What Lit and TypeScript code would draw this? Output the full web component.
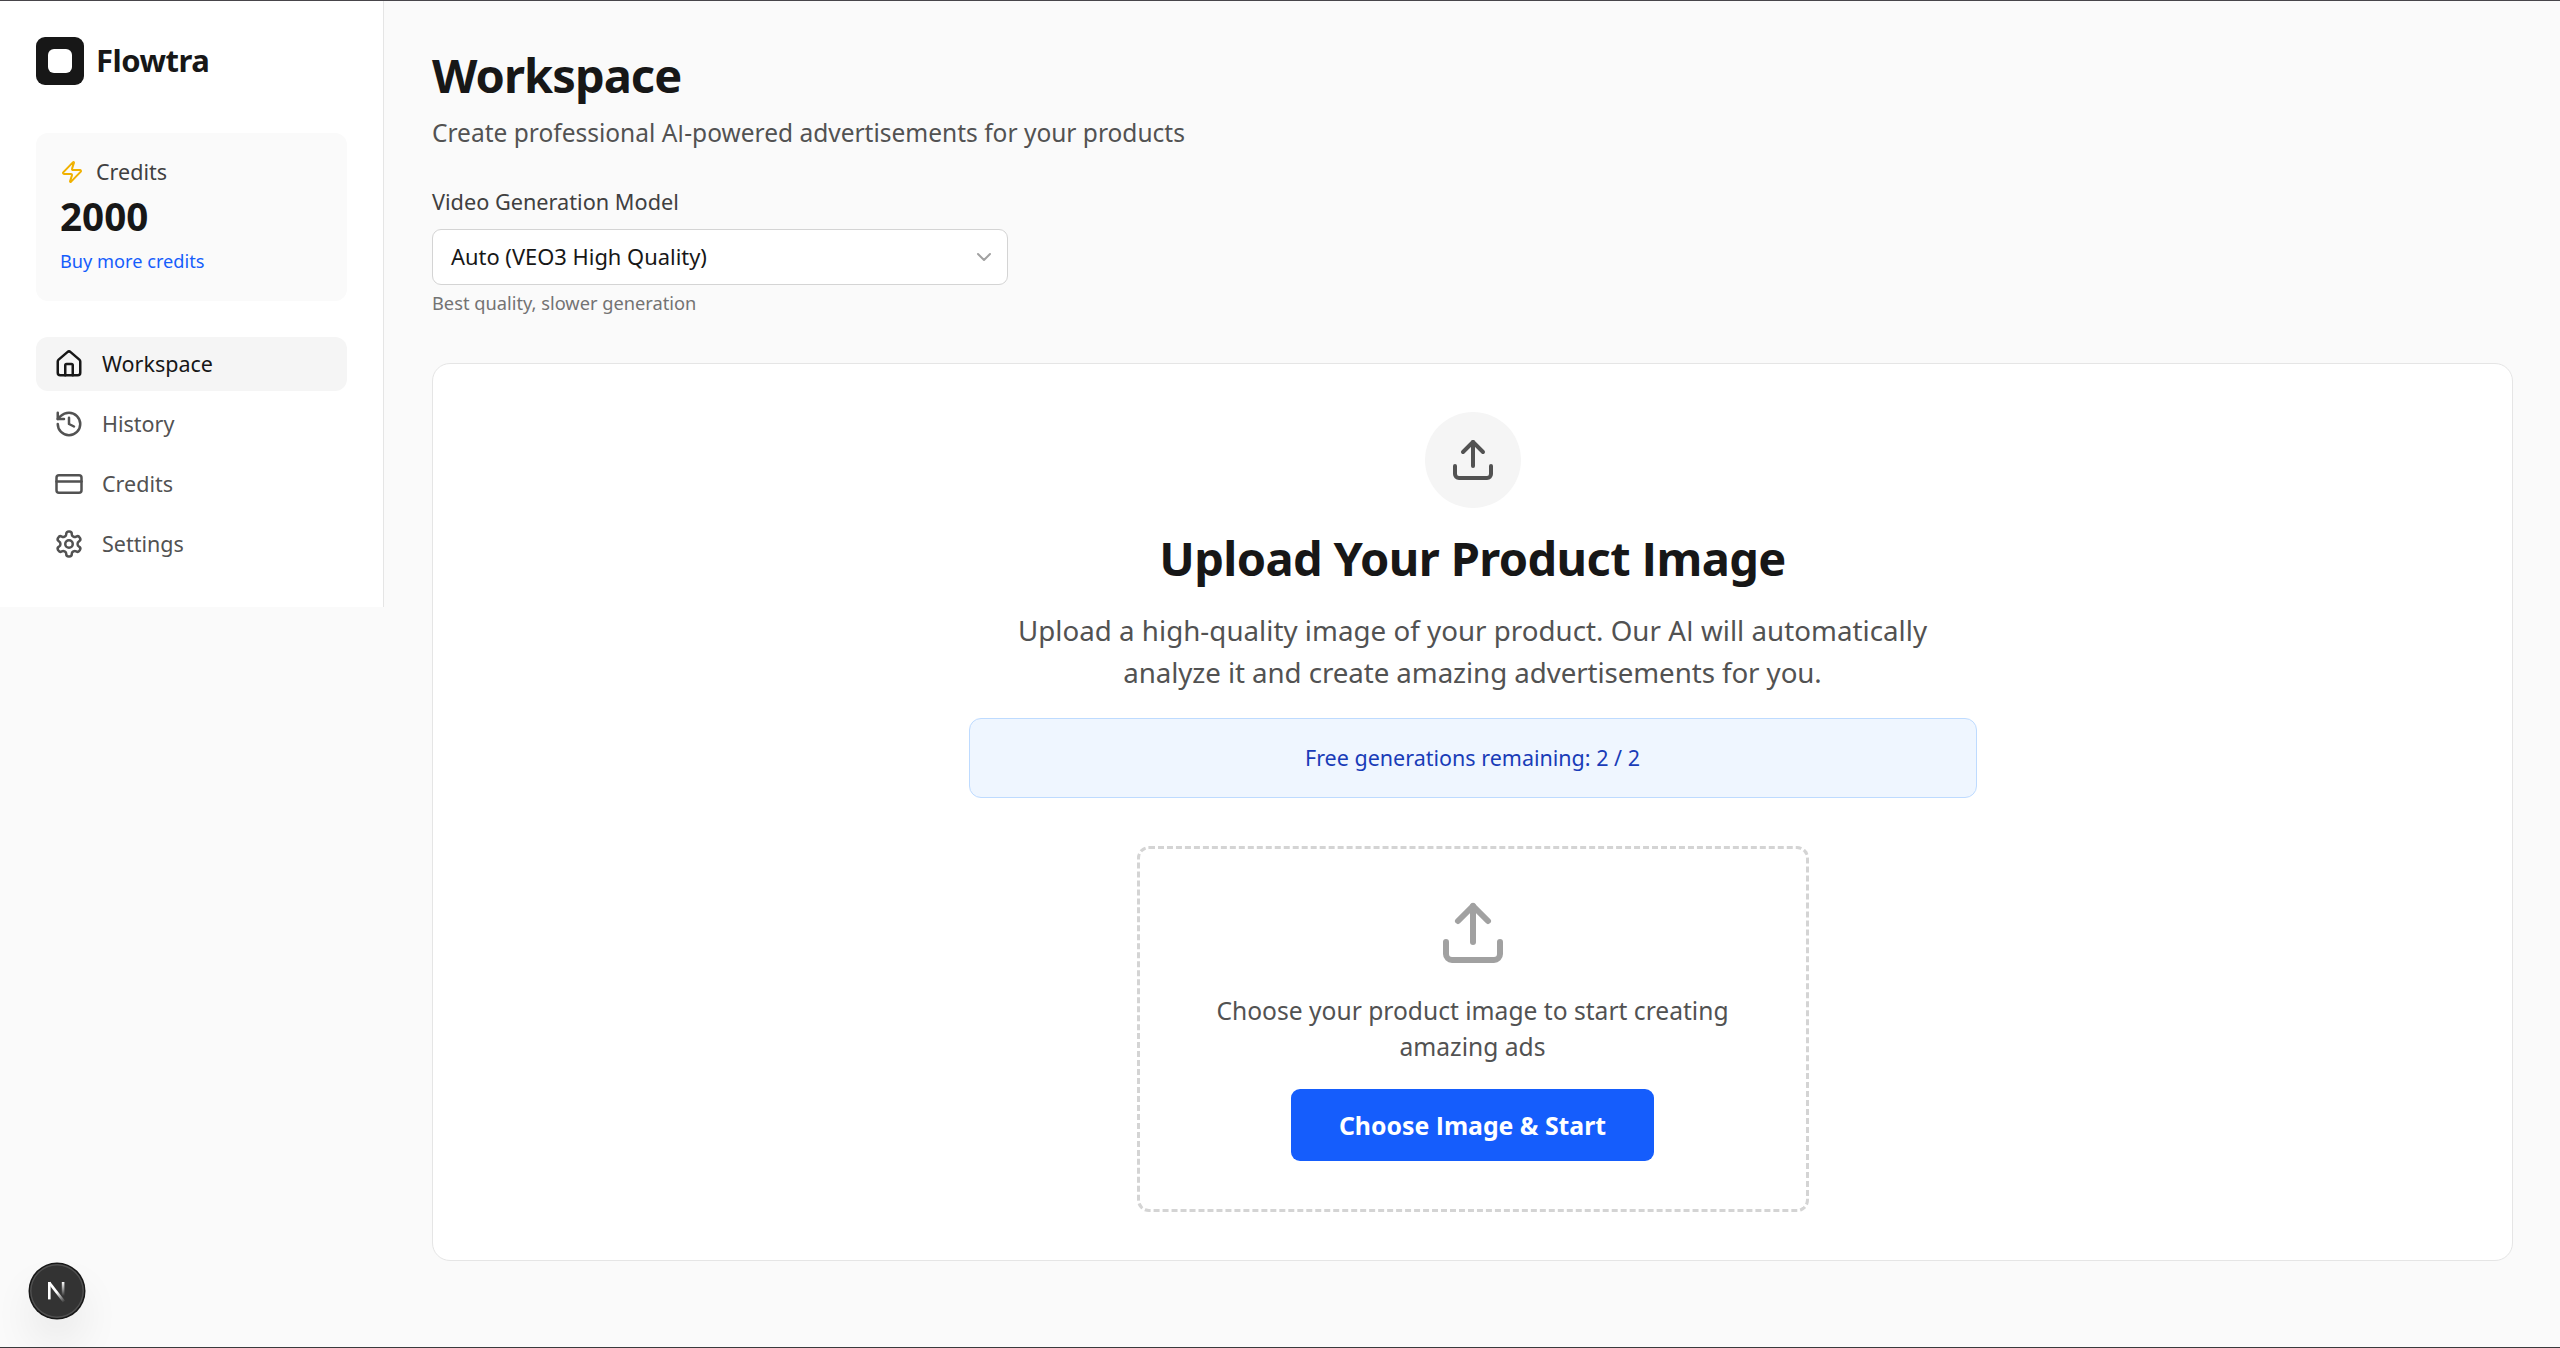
import { LitElement, html, svg, css } from 'lit';
import type { SVGTemplateResult, TemplateResult } from 'lit';
import { customElement, property, state } from 'lit/decorators.js';
import { classMap } from 'lit/directives/class-map.js';

const glyphs: Record<string, SVGTemplateResult> = {
  zap: svg`<path d="M4 14a1 1 0 0 1-.78-1.63l9.9-10.2a.5.5 0 0 1 .86.46l-1.92 6.02A1 1 0 0 0 13 10h7a1 1 0 0 1 .78 1.63l-9.9 10.2a.5.5 0 0 1-.86-.46l1.92-6.02A1 1 0 0 0 11 14z"/>`,
  house: svg`<path d="M15 21v-8a1 1 0 0 0-1-1h-4a1 1 0 0 0-1 1v8"/><path d="M3 10a2 2 0 0 1 .709-1.528l7-5.999a2 2 0 0 1 2.582 0l7 5.999A2 2 0 0 1 21 10v9a2 2 0 0 1-2 2H5a2 2 0 0 1-2-2z"/>`,
  history: svg`<path d="M3 12a9 9 0 1 0 9-9 9.75 9.75 0 0 0-6.74 2.74L3 8"/><path d="M3 3v5h5"/><path d="M12 7v5l4 2"/>`,
  card: svg`<rect width="20" height="14" x="2" y="5" rx="2"/><path d="M2 10h20"/>`,
  settings: svg`<path d="M12.22 2h-.44a2 2 0 0 0-2 2v.18a2 2 0 0 1-1 1.73l-.43.25a2 2 0 0 1-2 0l-.15-.08a2 2 0 0 0-2.73.73l-.22.38a2 2 0 0 0 .73 2.73l.15.1a2 2 0 0 1 1 1.72v.51a2 2 0 0 1-1 1.74l-.15.09a2 2 0 0 0-.73 2.73l.22.38a2 2 0 0 0 2.73.73l.15-.08a2 2 0 0 1 2 0l.43.25a2 2 0 0 1 1 1.73V20a2 2 0 0 0 2 2h.44a2 2 0 0 0 2-2v-.18a2 2 0 0 1 1-1.73l.43-.25a2 2 0 0 1 2 0l.15.08a2 2 0 0 0 2.73-.73l.22-.39a2 2 0 0 0-.73-2.73l-.15-.08a2 2 0 0 1-1-1.74v-.5a2 2 0 0 1 1-1.74l.15-.09a2 2 0 0 0 .73-2.73l-.22-.38a2 2 0 0 0-2.73-.73l-.15.08a2 2 0 0 1-2 0l-.43-.25a2 2 0 0 1-1-1.73V4a2 2 0 0 0-2-2z"/><circle cx="12" cy="12" r="3"/>`,
  upload: svg`<path d="M12 3v12"/><path d="m17 8-5-5-5 5"/><path d="M21 15v4a2 2 0 0 1-2 2H5a2 2 0 0 1-2-2v-4"/>`,
  chevron: svg`<path d="m6 9 6 6 6-6"/>`,
};

@customElement('line-icon')
class LineIcon extends LitElement {
  static styles = css`
    :host { display: block; flex: none; width: 24px; height: 24px; }
    .glyph { display: block; width: 100%; height: 100%; fill: none; stroke: currentColor; stroke-width: 2; stroke-linecap: round; stroke-linejoin: round; }
  `;
  @property() name = '';
  render() {
    return html`<svg class="glyph" viewBox="0 0 24 24" aria-hidden="true">${glyphs[this.name]}</svg>`;
  }
}

/* Sets the capital I in a face that draws it as a plain stem. */
const plainI = (text: string): TemplateResult =>
  html`${text.split('I').map((part, i) => (i ? html`<span class="stem">I</span>${part}` : part))}`;

const navItems = [
  { icon: 'house', label: 'Workspace' },
  { icon: 'history', label: 'History' },
  { icon: 'card', label: 'Credits' },
  { icon: 'settings', label: 'Settings' },
];

@customElement('app-root')
class AppRoot extends LitElement {
  static styles = css`
    :host {
      display: block; box-sizing: border-box; height: 1348px; overflow: hidden; position: relative;
      background: #fafafa; color: #171717;
      border-top: 1px solid #47454a; border-bottom: 1px solid #3a3a3c;
      font-family: "Noto Sans", "Open Sans", sans-serif; font-size: 21.5px; line-height: 30px;
    }
    * { box-sizing: border-box; }
    h1, h2, p { margin: 0; }
    .stem { font-family: "Open Sans", sans-serif; }
    .page { display: flex; align-items: flex-start; }

    .sidebar { width: 384px; flex: none; padding: 36px; background: #fff; border-right: 1px solid #e5e5e5; }
    .brand { display: flex; align-items: center; gap: 12px; height: 48px; margin-bottom: 48px; }
    .mark { width: 48px; height: 48px; border-radius: 9px; background: #171717; display: grid; place-items: center; }
    .hole { width: 24px; height: 24px; border-radius: 6px; background: #fff; }
    .brand-name { font-size: 31px; font-weight: 700; letter-spacing: -0.5px; line-height: 42px; padding-bottom: 2px; }
    .credits { height: 168px; padding: 24px; border-radius: 12px; background: #fafafa; margin-bottom: 36px; }
    .credits-head { display: flex; align-items: center; gap: 12px; color: #404040; }
    .zap { color: #f0b100; }
    .amount { font-size: 38.6px; font-weight: 700; line-height: 48px; margin-top: 5px; }
    .buy { display: block; font-size: 18.2px; line-height: 24px; margin-top: 9px; color: #155dfc; text-decoration: none; }
    .nav { display: flex; flex-direction: column; gap: 6px; }
    .nav-item { display: flex; align-items: center; gap: 18px; height: 54px; padding: 0 18px; border-radius: 12px; color: #525252; text-decoration: none; }
    .nav-item.active { background: #f5f5f5; color: #171717; }
    .nav-icon { width: 30px; height: 30px; }

    .main { flex: 1; min-width: 0; padding: 47px 47px 0 48px; }
    .title { font-size: 47px; font-weight: 700; line-height: 54px; letter-spacing: -0.95px; }
    .subtitle { font-size: 24.5px; line-height: 36px; margin-top: 13px; color: #525252; }
    .field { width: 576px; margin-top: 36px; }
    .label { display: block; font-size: 21.7px; color: #404040; }
    .select { display: flex; align-items: center; justify-content: space-between; height: 56px; margin-top: 12px; padding: 0 11px 0 18px; background: #fff; border: 1px solid #d4d4d4; border-radius: 9px; font-size: 21.9px; }
    .chevron { color: #a1a1a1; }
    .hint { font-size: 18.25px; line-height: 24px; margin-top: 6px; color: #737373; }

    .panel { margin-top: 48px; height: 898px; padding: 48px; background: #fff; border: 1px solid #e5e5e5; border-radius: 18px; display: flex; flex-direction: column; align-items: center; text-align: center; }
    .disc { width: 96px; height: 96px; flex: none; border-radius: 50%; background: #f5f5f5; color: #525252; display: grid; place-items: center; }
    .disc-icon { width: 48px; height: 48px; }
    .heading { font-size: 47px; font-weight: 700; line-height: 54px; letter-spacing: -0.62px; margin-top: 23px; white-space: nowrap; }
    .lead { font-size: 27.7px; line-height: 42px; margin-top: 24px; color: #525252; white-space: nowrap; }
    .lead-line { display: block; letter-spacing: 0.03px; }
    .lead-line.tight { letter-spacing: -0.07px; }
    .notice { width: 1008px; height: 80px; margin-top: 25px; border: 1px solid #bedbff; border-radius: 12px; background: #eff6ff; color: #193cb8; display: grid; place-items: center; }
    .drop { width: 672px; height: 366px; margin-top: 48px; padding: 48px; border: 3px dashed #d4d4d4; border-radius: 12px; display: flex; flex-direction: column; align-items: center; }
    .drop-icon { width: 72px; height: 72px; color: #a1a1a1; }
    .drop-text { font-size: 24.6px; line-height: 36px; margin-top: 24px; color: #525252; }
    .cta { width: 363px; height: 72px; margin-top: 24px; border: 0; border-radius: 9px; background: #155dfc; color: #fff; font: inherit; font-size: 24.8px; font-weight: 700; padding: 0; }

    .dev { position: absolute; left: 30px; bottom: 29px; width: 54px; height: 54px; border-radius: 50%; background: #333; box-shadow: 0 0 0 1.5px #171717, inset 0 0 0 1.5px rgba(255, 255, 255, 0.14), 0 24px 48px -12px rgba(0, 0, 0, 0.24); }
    .dev-logo { display: block; width: 54px; height: 54px; }
  `;

  @state() private current = 'Workspace';

  render() {
    return html`
      <div class="page">
        <aside class="sidebar">
          <div class="brand">
            <div class="mark"><div class="hole"></div></div>
            <span class="brand-name">Flowtra</span>
          </div>
          <section class="credits">
            <div class="credits-head"><line-icon class="zap" name="zap"></line-icon><span>Credits</span></div>
            <div class="amount">2000</div>
            <a class="buy">Buy more credits</a>
          </section>
          <nav class="nav">
            ${navItems.map(
              (item) => html`
                <a class=${classMap({ 'nav-item': true, active: item.label === this.current })} @click=${() => (this.current = item.label)}>
                  <line-icon class="nav-icon" name=${item.icon}></line-icon><span>${item.label}</span>
                </a>`,
            )}
          </nav>
        </aside>
        <main class="main">
          <h1 class="title">Workspace</h1>
          <p class="subtitle">${plainI('Create professional AI-powered advertisements for your products')}</p>
          <div class="field">
            <span class="label">Video Generation Model</span>
            <div class="select" role="combobox">
              <span>Auto (VEO3 High Quality)</span>
              <line-icon class="chevron" name="chevron"></line-icon>
            </div>
            <p class="hint">Best quality, slower generation</p>
          </div>
          <section class="panel">
            <div class="disc"><line-icon class="disc-icon" name="upload"></line-icon></div>
            <h2 class="heading">${plainI('Upload Your Product Image')}</h2>
            <p class="lead">
              <span class="lead-line">${plainI('Upload a high-quality image of your product. Our AI will automatically')}</span>
              <span class="lead-line tight">analyze it and create amazing advertisements for you.</span>
            </p>
            <div class="notice">Free generations remaining: 2 / 2</div>
            <div class="drop">
              <line-icon class="drop-icon" name="upload"></line-icon>
              <p class="drop-text">Choose your product image to start creating amazing ads</p>
              <button class="cta">${plainI('Choose Image & Start')}</button>
            </div>
          </section>
        </main>
      </div>
      <div class="dev">
        <svg class="dev-logo" viewBox="0 0 54 54" aria-hidden="true">
          <defs>
            <linearGradient id="fade-diagonal" gradientUnits="userSpaceOnUse" x1="27" y1="28" x2="34.5" y2="38">
              <stop offset="0" stop-color="#fff"/><stop offset="1" stop-color="#fff" stop-opacity="0"/>
            </linearGradient>
            <linearGradient id="fade-stem" gradientUnits="userSpaceOnUse" x1="0" y1="18" x2="0" y2="32">
              <stop offset="0" stop-color="#fff"/><stop offset="1" stop-color="#fff" stop-opacity="0"/>
            </linearGradient>
          </defs>
          <rect x="18" y="18" width="2.6" height="17.4" fill="#fff"/>
          <line x1="19.2" y1="18.6" x2="34" y2="37.6" stroke="url(#fade-diagonal)" stroke-width="2.6"/>
          <rect x="31.8" y="18" width="2.6" height="14" fill="url(#fade-stem)"/>
        </svg>
      </div>
    `;
  }
}
